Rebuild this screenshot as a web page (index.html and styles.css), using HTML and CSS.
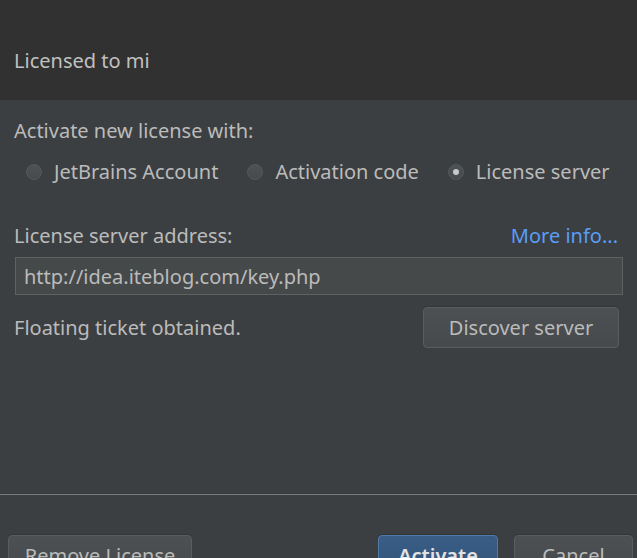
FILE: index.html
```html
<!DOCTYPE html>
<html>
<head>
<meta charset="utf-8">
<link rel="stylesheet" href="styles.css">
</head>
<body>
<div class="dialog">
  <div class="header"><span>Licensed to mi</span></div>
  <div class="content">
    <div class="label first">Activate new license with:</div>
    <div class="radios">
      <label class="radio"><span class="dot"></span><span>JetBrains Account</span></label>
      <label class="radio"><span class="dot"></span><span>Activation code</span></label>
      <label class="radio"><span class="dot checked"></span><span>License server</span></label>
    </div>
    <div class="addr-row">
      <span>License server address:</span>
      <a class="link">More info...</a>
    </div>
    <div class="field">http://idea.iteblog.com/key.php</div>
    <div class="status-row">
      <span>Floating ticket obtained.</span>
      <button class="btn discover">Discover server</button>
    </div>
  </div>
  <div class="separator"></div>
  <div class="footer">
    <button class="btn remove">Remove License</button>
    <div class="spacer"></div>
    <button class="btn primary">Activate</button>
    <button class="btn cancel">Cancel</button>
  </div>
</div>
</body>
</html>
```
FILE: styles.css
```css
html, body {
  margin: 0;
  padding: 0;
  background: #3c3f41;
}
body {
  font-family: "Noto Sans", "Open Sans", sans-serif;
  font-size: 20px;
  color: #bbbbbb;
}
.dialog {
  width: 637px;
  height: 558px;
  display: flex;
  flex-direction: column;
  overflow: hidden;
}
.header {
  height: 80px;
  padding-top: 20px;
  padding-left: 14px;
  background: #313131;
  display: flex;
  align-items: center;
  color: #c0c0c0;
}
.content {
  flex: 1;
  padding: 0 14px 0 14px;
  display: flex;
  flex-direction: column;
}
.label {
  line-height: 24px;
}
.first {
  margin-top: 19px;
}
.radios {
  margin-top: 17px;
  display: flex;
  align-items: center;
  gap: 29px;
  padding-left: 12px;
  line-height: 24px;
}
.radio {
  display: flex;
  align-items: center;
  gap: 12px;
}
.dot {
  width: 16px;
  height: 16px;
  border-radius: 50%;
  box-sizing: border-box;
  background: linear-gradient(#4d5254, #464a4c);
  border: 1px solid #545859;
  display: flex;
  align-items: center;
  justify-content: center;
}
.dot.checked::after {
  content: "";
  width: 6px;
  height: 6px;
  border-radius: 50%;
  background: #c8c8c8;
}
.addr-row {
  margin-top: 40px;
  display: flex;
  justify-content: space-between;
  line-height: 24px;
  padding-right: 5px;
}
.link {
  color: #589df6;
}
.field {
  margin-top: 9px;
  margin-left: 1px;
  margin-right: 0;
  height: 38px;
  box-sizing: border-box;
  border: 1px solid #5f6263;
  background: #45494a;
  padding-left: 8px;
  display: flex;
  align-items: center;
  color: #bbbbbb;
}
.status-row {
  margin-top: 12px;
  display: flex;
  justify-content: space-between;
  align-items: center;
  padding-right: 4px;
}
.btn {
  font-family: inherit;
  font-size: 20px;
  color: #bbbbbb;
  height: 41px;
  box-sizing: border-box;
  border: 1px solid #5a5d5e;
  border-radius: 4px;
  background: linear-gradient(#4c5052, #474a4c);
  padding: 0;
  box-shadow: 0 -1px 0 #333536;
}
.discover {
  width: 196px;
}
.separator {
  height: 1px;
  background: #7a7d7f;
  border-top: 1px solid #383a3c;
  margin-bottom: 0;
}
.footer {
  height: 63px;
  display: flex;
  align-items: flex-start;
  padding: 40px 4px 0 8px;
  box-sizing: border-box;
}
.spacer {
  flex: 1;
}
.remove {
  width: 184px;
  flex: none;
}
.primary {
  width: 120px;
  flex: none;
  background: linear-gradient(#395d86, #33547a);
  border-color: #4f7aa8;
  color: #e2e2e2;
  font-weight: 600;
  margin-right: 16px;
}
.cancel {
  width: 119px;
  flex: none;
}
```
